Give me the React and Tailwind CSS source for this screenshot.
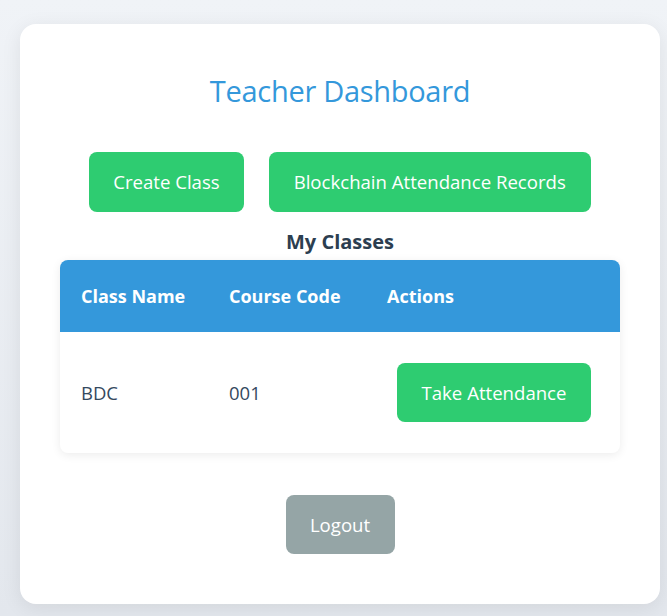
import React from 'react';

const classes = [{ name: 'BDC', code: '001' }];

const App = () => {
  return (
    <div className="min-h-[616px] bg-gradient-to-b from-[#f0f3f7] to-[#e3e7ed] pt-[24px] pl-[20px] pr-[7px] pb-[12px] font-['Open_Sans',sans-serif]">
      <div className="bg-white rounded-[16px] shadow-[0_4px_20px_rgba(0,0,0,0.08)] px-[40px] pt-[40px] pb-[50px] w-[640px]">
        <h1 className="text-center text-[#3498db] text-[29px] leading-[34px] mt-[10px] font-medium tracking-[-0.3px]">
          Teacher Dashboard
        </h1>

        <div className="flex justify-center gap-[25px] mt-[44px]">
          <button className="h-[60px] px-[24px] bg-[#2ecc71] text-white text-[18.6px] rounded-[8px]">
            Create Class
          </button>
          <button className="h-[60px] px-[25px] bg-[#2ecc71] text-white text-[18.6px] rounded-[8px]">
            Blockchain Attendance Records
          </button>
        </div>

        <h2 className="text-center text-[#2c3e50] text-[20px] font-bold leading-[28px] mt-[16px]">
          My Classes
        </h2>

        <table className="w-full table-fixed mt-[4px] border-collapse rounded-[8px] overflow-hidden shadow-[0_2px_10px_rgba(0,0,0,0.08)]">
          <thead>
            <tr className="bg-[#3498db] text-white text-[18px] font-bold whitespace-nowrap">
              <th className="w-[148px] h-[72px] px-[21px] text-left">Class Name</th>
              <th className="w-[158px] px-[21px] text-left">Course Code</th>
              <th className="px-[21px] text-left">Actions</th>
            </tr>
          </thead>
          <tbody>
            {classes.map((c) => (
              <tr key={c.code} className="text-[#34495e] text-[18.5px]">
                <td className="h-[121px] px-[21px]">{c.name}</td>
                <td className="px-[21px]">{c.code}</td>
                <td className="px-[21px]">
                  <button className="ml-[10px] w-[194px] h-[59px] bg-[#2ecc71] text-white text-[18.6px] rounded-[8px]">
                    Take Attendance
                  </button>
                </td>
              </tr>
            ))}
          </tbody>
        </table>

        <div className="flex justify-center mt-[42px]">
          <button className="w-[109px] h-[59px] bg-[#95a5a6] text-white text-[18.6px] rounded-[8px]">
            Logout
          </button>
        </div>
      </div>
    </div>
  );
};

export default App;
